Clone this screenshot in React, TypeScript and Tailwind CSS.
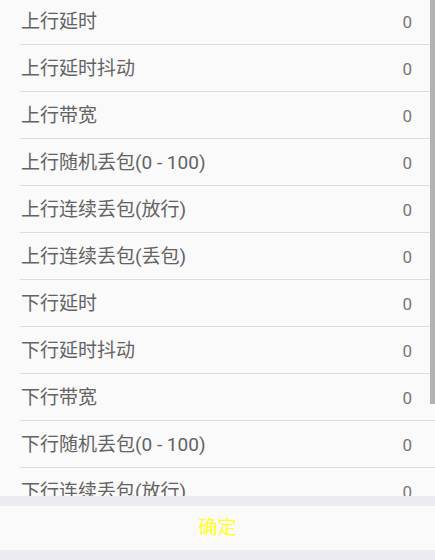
import React from "react";

const rows = [
  "上行延时",
  "上行延时抖动",
  "上行带宽",
  "上行随机丢包(0 - 100)",
  "上行连续丢包(放行)",
  "上行连续丢包(丢包)",
  "下行延时",
  "下行延时抖动",
  "下行带宽",
  "下行随机丢包(0 - 100)",
  "下行连续丢包(放行)",
  "下行连续丢包(丢包)",
];

export default function App() {
  return (
    <div
      className="w-[435px] h-[560px] bg-[#ececf0] flex flex-col overflow-hidden"
      style={{ fontFamily: 'Roboto, "Noto Sans CJK SC", sans-serif' }}
    >
      <div className="relative h-[496px] overflow-hidden bg-[#fafafa]">
        <div className="-mt-[2px] flex flex-col">
          {rows.map((r) => (
            <div
              key={r}
              className="ml-5 h-[47px] border-b border-[#dcdcdc] flex items-center justify-between pl-px pr-[23px] pt-[3px]"
            >
              <span className="text-[19px] text-[#636363]">{r}</span>
              <span className="text-[17px] text-[#777777]">0</span>
            </div>
          ))}
        </div>
        <div className="absolute right-0 top-0 w-[5px] h-[404px] bg-[#b2b2b2]" />
      </div>
      <div className="mt-[10px] h-[44px] bg-[#fafafa] flex items-center justify-center">
        <span className="text-[19px] text-[#ffff22]">确定</span>
      </div>
    </div>
  );
}
